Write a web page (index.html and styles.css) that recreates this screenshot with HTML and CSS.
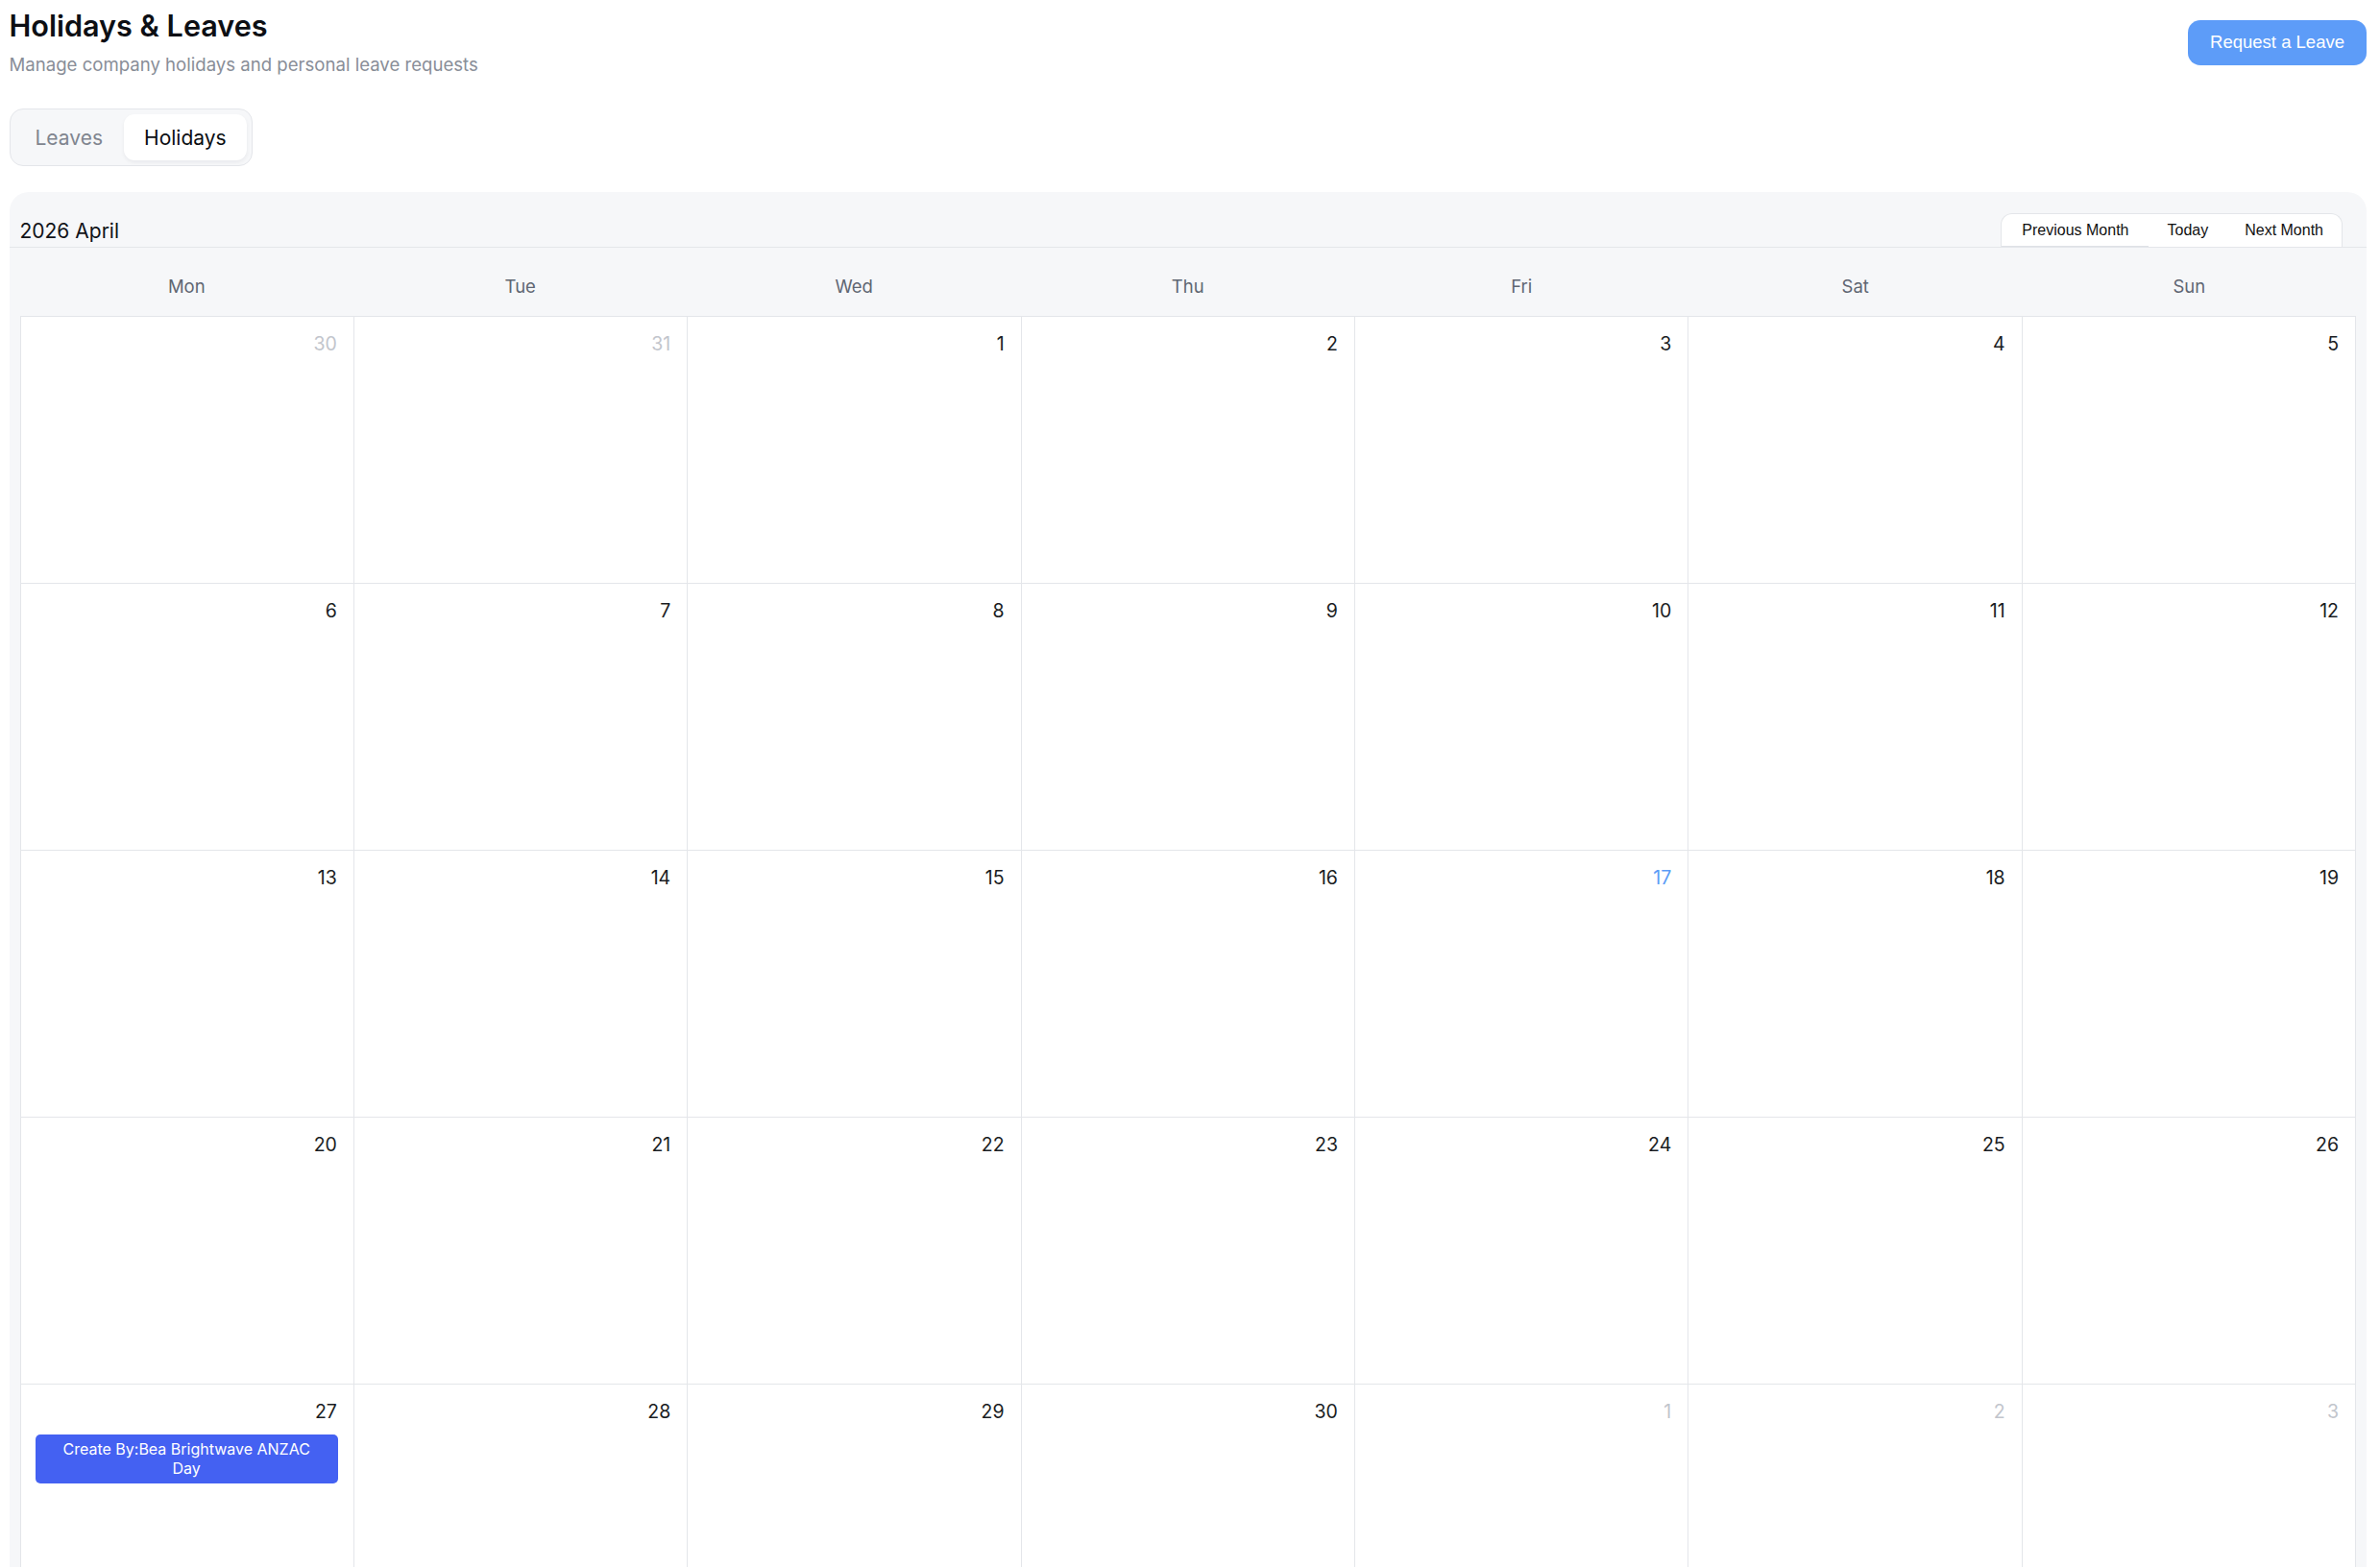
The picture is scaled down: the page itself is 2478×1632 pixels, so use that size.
FILE: index.html
```html
<!DOCTYPE html>
<html lang="en">
<head>
<meta charset="utf-8">
<title>Holidays &amp; Leaves</title>
<link rel="stylesheet" href="styles.css">
</head>
<body>
<div class="page">
  <header class="page-header">
    <div class="heading">
      <h1 class="title">Holidays &amp; Leaves</h1>
      <p class="subtitle">Manage company holidays and personal leave requests</p>
    </div>
    <button class="btn-primary">Request a Leave</button>
  </header>

  <div class="tabs">
    <div class="tab">Leaves</div>
    <div class="tab active">Holidays</div>
  </div>

  <section class="card">
    <div class="cal-header">
      <div class="month-title">2026 April</div>
      <div class="toolbar">
        <button class="tool first">Previous Month</button>
        <button class="tool">Today</button>
        <button class="tool">Next Month</button>
      </div>
    </div>
    <div class="weekdays">
      <div class="weekday">Mon</div>
      <div class="weekday">Tue</div>
      <div class="weekday">Wed</div>
      <div class="weekday">Thu</div>
      <div class="weekday">Fri</div>
      <div class="weekday">Sat</div>
      <div class="weekday">Sun</div>
    </div>
    <div class="grid">
      <div class="cell"><div class="day other">30</div></div>
      <div class="cell"><div class="day other">31</div></div>
      <div class="cell"><div class="day">1</div></div>
      <div class="cell"><div class="day">2</div></div>
      <div class="cell"><div class="day">3</div></div>
      <div class="cell"><div class="day">4</div></div>
      <div class="cell"><div class="day">5</div></div>

      <div class="cell"><div class="day">6</div></div>
      <div class="cell"><div class="day">7</div></div>
      <div class="cell"><div class="day">8</div></div>
      <div class="cell"><div class="day">9</div></div>
      <div class="cell"><div class="day">10</div></div>
      <div class="cell"><div class="day">11</div></div>
      <div class="cell"><div class="day">12</div></div>

      <div class="cell"><div class="day">13</div></div>
      <div class="cell"><div class="day">14</div></div>
      <div class="cell"><div class="day">15</div></div>
      <div class="cell"><div class="day">16</div></div>
      <div class="cell"><div class="day today">17</div></div>
      <div class="cell"><div class="day">18</div></div>
      <div class="cell"><div class="day">19</div></div>

      <div class="cell"><div class="day">20</div></div>
      <div class="cell"><div class="day">21</div></div>
      <div class="cell"><div class="day">22</div></div>
      <div class="cell"><div class="day">23</div></div>
      <div class="cell"><div class="day">24</div></div>
      <div class="cell"><div class="day">25</div></div>
      <div class="cell"><div class="day">26</div></div>

      <div class="cell">
        <div class="day">27</div>
        <div class="event">Create By:Bea Brightwave ANZAC Day</div>
      </div>
      <div class="cell"><div class="day">28</div></div>
      <div class="cell"><div class="day">29</div></div>
      <div class="cell"><div class="day">30</div></div>
      <div class="cell"><div class="day other">1</div></div>
      <div class="cell"><div class="day other">2</div></div>
      <div class="cell"><div class="day other">3</div></div>
    </div>
  </section>
</div>
</body>
</html>
```

FILE: styles.css
```css
* { box-sizing: border-box; }

html { scrollbar-width: none; }

body {
  margin: 0;
  background: #ffffff;
  font-family: Inter, "Noto Sans", sans-serif;
  color: #111318;
}

.page {
  padding: 9px 14px 0 9.5px;
}

.page-header {
  display: flex;
  justify-content: space-between;
  align-items: center;
}

.title {
  margin: 0;
  font-size: 30.6px;
  line-height: 36px;
  font-weight: 600;
  color: #0d0f14;
}

.subtitle {
  margin: 10px 0 0;
  font-size: 18.6px;
  line-height: 24px;
  color: #898e98;
}

.btn-primary {
  height: 47px;
  padding: 0 23px;
  border: none;
  border-radius: 13px;
  background: #5d9cf8;
  color: #ffffff;
  font-family: "Liberation Sans", Arial, sans-serif;
  font-size: 18.5px;
}

.tabs {
  display: flex;
  width: fit-content;
  gap: 1px;
  margin-top: 33.5px;
  padding: 5px;
  border: 1px solid #e4e6ea;
  border-radius: 14px;
  background: #f6f7f9;
}

.tab {
  display: flex;
  align-items: center;
  height: 48px;
  padding: 2px 21px 0;
  border-radius: 11px;
  font-size: 21px;
  color: #80858f;
}

.tab.active {
  background: #ffffff;
  color: #0b0d12;
  box-shadow: 0 2px 4px rgba(17, 24, 39, 0.06);
}

.card {
  margin-top: 27px;
  padding-top: 22px;
  background: #f6f7f9;
  border-radius: 20px 20px 0 0;
}

.cal-header {
  display: flex;
  justify-content: space-between;
  align-items: flex-end;
  height: 36px;
  padding: 0 25px 0 11px;
  border-bottom: 1px solid #e4e6ea;
}

.month-title {
  align-self: center;
  padding-top: 3px;
  font-size: 21px;
  line-height: 26px;
  color: #111318;
}

.toolbar {
  display: flex;
  height: 35px;
  background: #ffffff;
  border: 1px solid #e4e6ea;
  border-bottom: none;
  border-radius: 12px 12px 0 0;
  overflow: hidden;
}

.tool {
  padding: 0 19px;
  border: none;
  background: transparent;
  font-family: "Liberation Sans", Arial, sans-serif;
  font-size: 16px;
  color: #111111;
}

.tool.first {
  padding-left: 21px;
  padding-right: 21px;
  box-shadow: inset 0 -1px 0 #dfe1e6;
}

.weekdays {
  display: grid;
  grid-template-columns: repeat(7, 1fr);
  margin: 0 11px;
  padding: 28px 0 19px;
}

.weekday {
  text-align: center;
  font-size: 18.5px;
  line-height: 24px;
  color: #5f6672;
}

.grid {
  display: grid;
  grid-template-columns: repeat(7, 1fr);
  grid-auto-rows: 278px;
  margin: 0 11px;
  background: #ffffff;
  border-top: 1px solid #e4e6ea;
  border-left: 1px solid #e4e6ea;
}

.cell {
  display: flex;
  flex-direction: column;
  padding: 17px 16px 16px 15px;
  border-right: 1px solid #e4e6ea;
  border-bottom: 1px solid #e4e6ea;
}

.day {
  padding-right: 1px;
  text-align: right;
  font-size: 19.5px;
  line-height: 23px;
  color: #1a1d23;
}

.day.other { color: #c2c5cc; }

.day.today { color: #5b9cf6; }

.event {
  margin-top: 12px;
  padding: 5.5px 16px;
  border-radius: 5px;
  background: #4461f2;
  color: #ffffff;
  font-size: 16px;
  line-height: 20px;
  text-align: center;
}
```
